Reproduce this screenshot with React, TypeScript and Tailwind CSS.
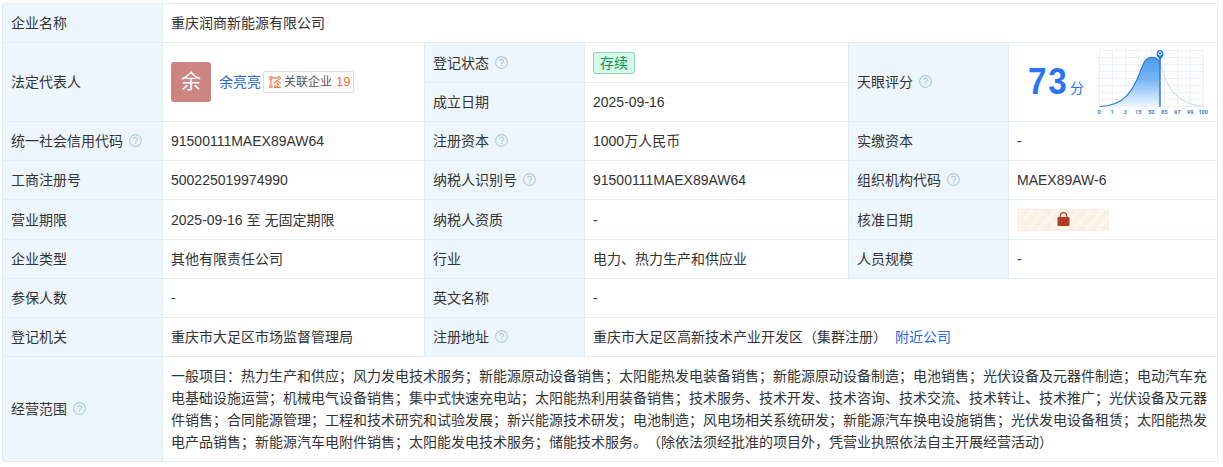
import type { ReactNode } from 'react';

function Help() {
  return (
    <svg className="mb-px ml-[6px] h-[13px] w-[13px] shrink-0" viewBox="0 0 13 13" fill="none" stroke="#afcbe0">
      <circle cx="6.5" cy="6.5" r="5.9" strokeWidth="1.2" />
      <path d="M4.6 5.2a1.9 1.9 0 1 1 2.9 1.6c-.7.4-1 .7-1 1.4" strokeWidth="1.3" />
      <path d="M6.5 8.9v1.2" strokeWidth="1.4" />
    </svg>
  );
}

function Label({ text, help, span = '' }: { text: string; help?: boolean; span?: string }) {
  return (
    <div className={`flex items-center border-t border-l border-[#e1ecf3] bg-[#eef6fd] pl-2 ${span}`}>
      <span>{text}</span>
      {help && <Help />}
    </div>
  );
}

function Value({ children, span = '' }: { children: ReactNode; span?: string }) {
  return <div className={`flex items-center border-t border-l border-[#e1ecf3] pl-2 ${span}`}>{children}</div>;
}

function LinkedCompanies() {
  return (
    <span className="ml-[2px] flex h-[22px] w-[91px] items-center rounded-[2px] border border-[#d9dce2] pl-[5px] text-xs text-[#555]">
      <svg className="mr-[3px] h-3 w-3" viewBox="0 0 12 12" fill="none" stroke="#ef7b4c" strokeWidth="1.1">
        <circle cx="1.9" cy="1.9" r="1.3" />
        <circle cx="10.1" cy="1.9" r="1.3" />
        <circle cx="1.9" cy="10.1" r="1.3" />
        <path d="M3.2 1.9h5.6M1.9 3.2v5.6M4.6 7.3l3.6-2.8 3.6 2.8M8.2 6.5v4.6M8.2 8.7h2.3M6 8.4v2.7M4.6 11.4h7.2" />
      </svg>
      关联企业
      <span className="ml-1 text-[13px] text-[#e8763c]">19</span>
    </span>
  );
}

const ticks = ['0', '1', '3', '15', '50', '85', '97', '99', '100'];

function ScoreChart() {
  return (
    <svg className="mb-[6px] ml-[11px] h-[72px] w-[116px] shrink-0" viewBox="0 0 116 72">
      <defs>
        <linearGradient id="fill" x1="0" y1="0" x2="0" y2="1">
          <stop offset="0" stopColor="#4a9bef" />
          <stop offset="0.45" stopColor="#78b5f5" />
          <stop offset="1" stopColor="#edf6ff" />
        </linearGradient>
      </defs>
      <g stroke="#e6edf5" strokeWidth="0.8">
        {ticks.map((t, i) => (
          <path key={t} d={`M${4.5 + i * 13} 7.5v56`} />
        ))}
        {ticks.map((t, i) => (
          <path key={t} d={`M4.5 ${7.5 + i * 7}h104`} />
        ))}
      </g>
      <path d="M65 19.7C70 34 74 60 108.5 63.5" fill="none" stroke="#c5d5e4" strokeWidth="1" />
      <path d="M4.5 63.5C29 63.3 38 48 45.5 28C48.5 20 50.5 14.3 57 14.3C60.5 14.3 63 15.5 65 19.7V63.5Z" fill="url(#fill)" />
      <path d="M4.5 63.5C29 63.3 38 48 45.5 28C48.5 20 50.5 14.3 57 14.3C60.5 14.3 63 15.5 65 19.7" fill="none" stroke="#2877cf" strokeWidth="1.1" />
      <path d="M65 14v49.8" stroke="#3278cb" strokeWidth="1.5" />
      <path d="M65 17.6C64.1 15.2 61.6 13.7 61.6 10.7a3.4 3.4 0 1 1 6.8 0C68.4 13.7 65.9 15.2 65 17.6Z" fill="#2678d6" />
      <circle cx="65" cy="10.6" r="1.6" fill="#2678d6" stroke="#fff" strokeWidth="1" />
      <g fill="#3480dc" fontSize="5.6" fontWeight="700" textAnchor="middle">
        {ticks.map((t, i) => (
          <text key={t} x={4.2 + i * 13} y="71" fontFamily="Roboto, sans-serif">
            {t}
          </text>
        ))}
      </g>
    </svg>
  );
}

function LockedValue() {
  return (
    <div className="flex h-[22px] w-[92px] items-center justify-center border border-[#fbefe3] bg-[repeating-linear-gradient(130deg,#fdf6ec_0px,#fdf5eb_4px,#f8eee3_5px,#fcf4ea_6px,#f8eee3_8px,#fdf6ec_9px)]">
      <svg className="mb-[1px] h-[14px] w-[13px]" viewBox="0 0 13 14" fill="none">
        <path d="M3.3 6V3.800a3.200 3.200 0 0 1 6.400 0v2.200" stroke="#ae3e27" strokeWidth="1.200" />
        <rect x="0.500" y="5" width="12" height="9" rx="1.300" fill="#ae3e27" />
      </svg>
    </div>
  );
}

const scope = [
  '一般项目：热力生产和供应；风力发电技术服务；新能源原动设备销售；太阳能热发电装备销售；新能源原动设备制造；电池销售；光伏设备及元器件制造；电动汽车充',
  '电基础设施运营；机械电气设备销售；集中式快速充电站；太阳能热利用装备销售；技术服务、技术开发、技术咨询、技术交流、技术转让、技术推广；光伏设备及元器',
  '件销售；合同能源管理；工程和技术研究和试验发展；新兴能源技术研发；电池制造；风电场相关系统研发；新能源汽车换电设施销售；光伏发电设备租赁；太阳能热发',
  '电产品销售；新能源汽车电附件销售；太阳能发电技术服务；储能技术服务。（除依法须经批准的项目外，凭营业执照依法自主开展经营活动）',
];

export default function App() {
  return (
    <div
      className="h-[467px] w-[1223px] overflow-hidden bg-white pt-[3px] pl-[2px] font-['Liberation_Sans','Noto_Sans_CJK_SC',sans-serif] text-sm text-[#333] [text-spacing-trim:space-all]"
      lang="zh-CN"
    >
      <div className="grid w-[1216px] grid-cols-[160px_262px_160px_264px_160px_209px] grid-rows-[39px_40px_39px_39px_39px_40px_39px_39px_39px_105px] border-r border-b border-[#e1ecf3] leading-[22px] whitespace-nowrap">
        <Label text="企业名称" />
        <Value span="col-span-5">重庆润商新能源有限公司</Value>

        <Label text="法定代表人" span="row-span-2" />
        <Value span="row-span-2">
          <span className="flex h-10 w-10 items-center justify-center rounded-[3px] bg-[#cd8584] text-xl text-white">余</span>
          <a className="ml-2 text-[#2468d9]">余亮亮</a>
          <LinkedCompanies />
        </Value>
        <Label text="登记状态" help />
        <Value>
          <span className="flex h-[22px] w-[42px] items-center justify-center rounded-[2px] border border-[#93d3b2] bg-[#d6faea] text-[#168c50]">
            存续
          </span>
        </Value>
        <Label text="天眼评分" help span="row-span-2" />
        <Value span="row-span-2">
          <span className="ml-[11px] w-[40px] origin-left scale-x-[0.9] text-[37px] leading-10 font-bold tracking-[2px] text-[#2876f5]">73</span>
          <span className="mt-3 ml-[2px] text-[#2876f5]">分</span>
          <ScoreChart />
        </Value>
        <Label text="成立日期" />
        <Value>2025-09-16</Value>

        <Label text="统一社会信用代码" help />
        <Value>91500111MAEX89AW64</Value>
        <Label text="注册资本" help />
        <Value>1000万人民币</Value>
        <Label text="实缴资本" />
        <Value>-</Value>

        <Label text="工商注册号" />
        <Value>500225019974990</Value>
        <Label text="纳税人识别号" help />
        <Value>91500111MAEX89AW64</Value>
        <Label text="组织机构代码" help />
        <Value>MAEX89AW-6</Value>

        <Label text="营业期限" />
        <Value>2025-09-16 至 无固定期限</Value>
        <Label text="纳税人资质" />
        <Value>-</Value>
        <Label text="核准日期" />
        <Value>
          <LockedValue />
        </Value>

        <Label text="企业类型" />
        <Value>其他有限责任公司</Value>
        <Label text="行业" />
        <Value>电力、热力生产和供应业</Value>
        <Label text="人员规模" />
        <Value>-</Value>

        <Label text="参保人数" />
        <Value>-</Value>
        <Label text="英文名称" />
        <Value span="col-span-3">-</Value>

        <Label text="登记机关" />
        <Value>重庆市大足区市场监督管理局</Value>
        <Label text="注册地址" help />
        <Value span="col-span-3">
          重庆市大足区高新技术产业开发区（集群注册）
          <a className="ml-2 text-[#2468d9]">附近公司</a>
        </Value>

        <Label text="经营范围" help />
        <Value span="col-span-5">
          <div>
            {scope.map((line) => (
              <p key={line}>{line}</p>
            ))}
          </div>
        </Value>
      </div>
    </div>
  );
}
